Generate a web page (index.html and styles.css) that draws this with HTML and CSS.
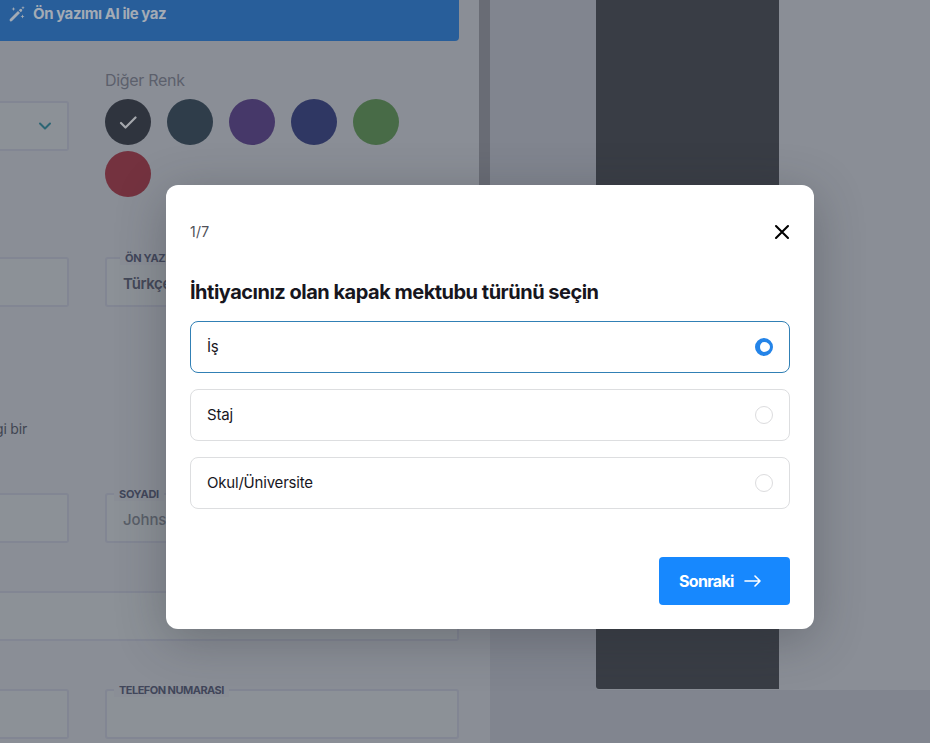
FILE: index.html
```
<!DOCTYPE html>
<html lang="tr">
<head>
<meta charset="utf-8">
<title>Ön yazı</title>
<link rel="stylesheet" href="styles.css">
</head>
<body>
<div class="page">
  <main class="editor">
    <div class="form">
      <div class="banner">
        <svg width="16" height="16" viewBox="0 0 16 16" fill="currentColor"><path d="M1 13 9 5l2 2-8 8a1.4 1.4 0 0 1-2-2ZM9.8 4.2l1-1a1.4 1.4 0 0 1 2 2l-1 1ZM4.5 1l.6 1.4 1.4.6-1.4.6L4.5 5l-.6-1.4L2.5 3l1.4-.6ZM14 0l.5 1.2 1.2.5-1.2.5L14 3.400l-.5-1.2-1.200-.5 1.200-.5ZM13.500 8.500l.6 1.400 1.400.6-1.400.6-.6 1.400-.6-1.400-1.400-.6 1.400-.6Z"/></svg>
        <span class="banner-text">Ön yazımı AI ile yaz</span>
      </div>
      <div class="row colors-row">
        <div class="field select">
          <svg width="14" height="10" viewBox="0 0 14 10" fill="none" stroke="currentColor" stroke-width="2" stroke-linecap="round" stroke-linejoin="round"><path d="m2 2.500 5 5 5-5"/></svg>
        </div>
        <div class="colors">
          <div class="colors-title"><span>Diğer Renk</span></div>
          <div class="swatches">
            <i class="swatch black"><svg width="18" height="14" viewBox="0 0 18 14" fill="none" stroke="currentColor" stroke-width="2.2" stroke-linecap="round" stroke-linejoin="round"><path d="m2 8 4.500 4.500L16.500 2.500"/></svg></i>
            <i class="swatch slate"></i><i class="swatch purple"></i><i class="swatch indigo"></i><i class="swatch green"></i><i class="swatch red"></i>
          </div>
        </div>
      </div>
      <div class="row language-row">
        <div class="field"></div>
        <div class="field"><span class="label wide">ÖN YAZI DİLİ</span><span class="value">Türkçe</span></div>
      </div>
      <p class="hint"><span>gi bir</span></p>
      <div class="row name-row">
        <div class="field"></div>
        <div class="field"><span class="label">SOYADI</span><span class="value placeholder">Johnson</span></div>
      </div>
      <div class="field full"></div>
      <div class="row phone-row">
        <div class="field"></div>
        <div class="field"><span class="label phone">TELEFON NUMARASI</span></div>
      </div>
    </div>
    <div class="track"><div class="thumb"></div></div>
  </main>
  <aside class="preview">
    <div class="sheet"><div class="sheet-side"></div></div>
  </aside>
</div>
<section class="dialog">
  <header class="dialog-head">
    <span class="step">1/7</span>
    <svg width="16" height="16" viewBox="0 0 16 16" fill="none" stroke="#000" stroke-width="2.1" stroke-linecap="round"><path d="m2 2 12 12M14 2 2 14"/></svg>
  </header>
  <h1><span>İhtiyacınız olan kapak mektubu türünü seçin</span></h1>
  <div class="options">
    <div class="option selected"><span>İş</span><i class="radio"></i></div>
    <div class="option"><span>Staj</span><i class="radio"></i></div>
    <div class="option"><span>Okul/Üniversite</span><i class="radio"></i></div>
  </div>
  <button class="next"><span>Sonraki</span><svg width="18" height="12" viewBox="0 0 18 12" fill="none" stroke="currentColor" stroke-width="1.6" stroke-linecap="round" stroke-linejoin="round"><path d="M1 6h15M11 1l5 5-5 5"/></svg></button>
</section>
</body>
</html>
```
FILE: styles.css
```
* { box-sizing: border-box; }
body { margin: 0; width: 930px; height: 743px; overflow: hidden; position: relative; font-family: Inter, "Liberation Sans", sans-serif; }
svg { display: block; flex: none; }
span { white-space: nowrap; }
.page { display: flex; height: 743px; }
.editor { width: 490px; display: flex; justify-content: space-between; background: #8a8e96; }
.form { width: 459px; }
.track { width: 11px; }
.thumb { height: 400px; background: #696c75; }
.banner { height: 41px; display: flex; align-items: flex-start; gap: 8px; padding: 6px 0 0 9px; background: #285e9a; border-bottom-right-radius: 4px; color: #a3abb5; }
.banner-text { margin-top: -1px; font-size: 15px; line-height: 17px; font-weight: 700; letter-spacing: -0.43px; }
.row { display: grid; grid-template-columns: 69px 354px; column-gap: 36px; }
.field { position: relative; height: 50px; border: 2px solid #828693; border-radius: 3px; background: #8c9197; }
.row > .field:first-child, .full { border-left: 0; border-radius: 0 3px 3px 0; }
.colors-row { margin-top: 31px; }
.select { margin-top: 29px; display: flex; align-items: center; justify-content: flex-end; padding-right: 15px; color: #2d6674; }
.colors-title { height: 27px; font-size: 16px; line-height: 17px; color: #5c606c; letter-spacing: -0.3px; }
.swatches { display: flex; flex-wrap: wrap; gap: 6px 16px; }
.swatch { width: 46px; height: 46px; border-radius: 50%; display: flex; align-items: center; justify-content: center; color: #a5a8ad; }
.black { background: #2f343e; }
.slate { background: #2f3d4a; }
.purple { background: #463869; }
.indigo { background: #2f3763; }
.green { background: #486b47; }
.red { background: #74323f; }
.language-row { margin-top: 60px; }
.label { position: absolute; top: -8px; left: 7px; padding: 0 5px; background: #8a8e96; font-size: 11px; line-height: 14px; font-weight: 700; color: #41465a; letter-spacing: -0.3px; }
.wide { left: 13px; }
.phone { letter-spacing: -0.53px; }
.value { display: block; padding: 16px 0 0 16px; font-size: 15px; line-height: 18px; font-weight: 600; color: #434858; letter-spacing: -0.4px; }
.placeholder { color: #595e68; font-weight: 500; letter-spacing: -0.1px; }
.hint { margin: 113px 0 0; height: 18px; font-size: 14px; line-height: 18px; color: #414652; letter-spacing: -0.2px; }
.hint span { margin-left: -5px; }
.name-row { margin-top: 55px; }
.full { margin-top: 48px; }
.phone-row { margin-top: 48px; }
.preview { flex: 1; padding-left: 106px; background: #81858f; }
.sheet { height: 690px; background: #8a8e96; border-bottom-left-radius: 3px; overflow: hidden; }
.sheet-side { width: 183px; height: 689px; background: #393d45; border-bottom-left-radius: 3px; }
.dialog { position: absolute; left: 166px; top: 185px; width: 648px; height: 444px; padding: 36px 24px 24px; border-radius: 12px; background: #fff; color: #17161e; box-shadow: 0 10px 50px rgba(40,42,50,.32); display: flex; flex-direction: column; }
.dialog-head { height: 22px; display: flex; align-items: center; justify-content: space-between; }
.step { margin-top: -2px; font-size: 14px; color: #505057; letter-spacing: 0.2px; }
h1 { margin: 36px 0 17px; height: 25px; font-size: 20px; line-height: 26px; font-weight: 700; letter-spacing: -0.5px; }
.options { display: flex; flex-direction: column; gap: 16px; }
.option { height: 52px; display: flex; align-items: center; justify-content: space-between; padding: 0 16px; border: 1px solid #dddee0; border-radius: 8px; font-size: 15px; font-weight: 400; letter-spacing: -0.2px; }
.option span { margin-top: -1px; }
.option.selected { border-color: #3180b5; }
.radio { width: 18px; height: 18px; border: 1px solid #dcdcde; border-radius: 50%; }
.selected .radio { border: 4px solid #2484e8; border-left-width: 5px; border-right-width: 3px; background: #fff; }
.selected .radio { border-width: 4px 3px 4px 5px; }
.next { align-self: flex-end; margin-top: auto; width: 131px; height: 48px; display: flex; align-items: center; gap: 10px; padding: 0 20px 1px; border: 0; border-radius: 4px; background: #1788fe; color: #fff; font-family: inherit; font-size: 16px; font-weight: 700; letter-spacing: -0.68px; }
```
